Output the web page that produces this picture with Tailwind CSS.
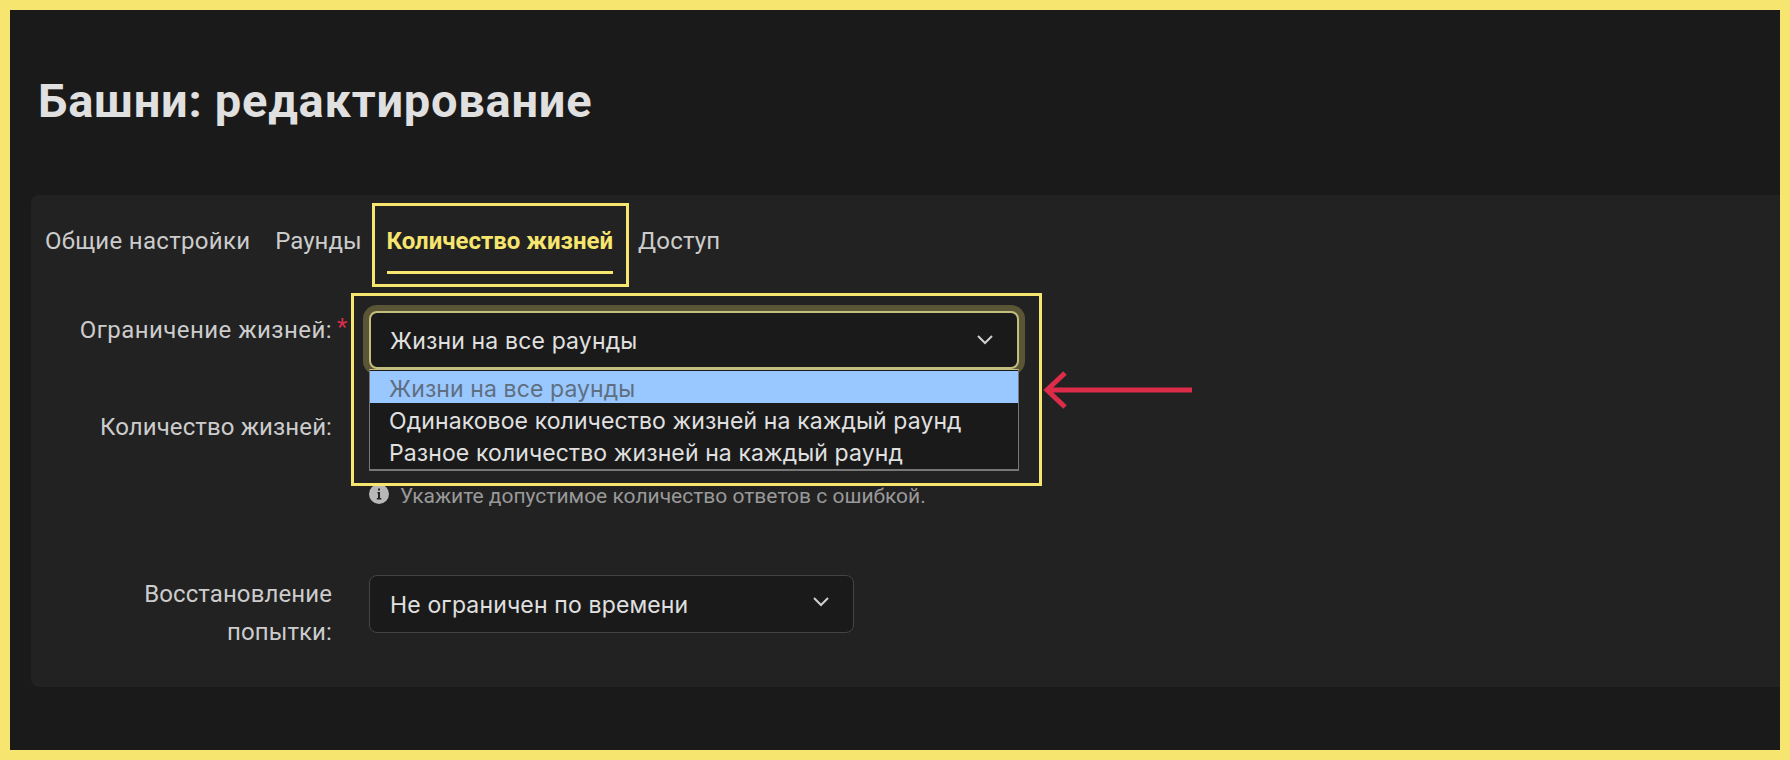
<!DOCTYPE html>
<html lang="ru">
<head>
<meta charset="utf-8">
<script src="https://cdn.jsdelivr.net/npm/@tailwindcss/browser@4"></script>
</head>
<body class="m-0">
<div class="relative w-[1790px] h-[760px] overflow-hidden border-[10px] border-[#f6e56e] bg-[#1a1a1a] font-['Roboto',sans-serif] text-[#d9d9d9]">
  <div class="pl-[21px] flex flex-col h-full">
    <h1 class="h-[185px] pl-[7px] pt-[53px] text-[47px] leading-[76px] font-bold text-[#e0e0e0] tracking-[0.75px]">Башни: редактирование</h1>
    <section class="relative h-[492px] rounded-l-lg bg-[#222222]">
      <nav class="flex gap-[25px] pl-[14px] h-[79px] text-[24px]">
        <a class="pt-[29px] leading-[34px] tracking-[0.3px] text-[#cccccc]">Общие настройки</a>
        <a class="pt-[29px] leading-[34px] text-[#cccccc]">Раунды</a>
        <a class="pt-[29px] leading-[34px] font-bold text-[#f6e56e] border-b-[3px] border-[#f6e56e]">Количество жизней</a>
        <a class="pt-[29px] leading-[34px] tracking-[0.2px] text-[#cccccc]">Доступ</a>
      </nav>
      <div class="pt-[37px] flex flex-col">
        <div class="flex h-[87px]">
          <label class="w-[301px] text-right text-[24px] leading-[38px] tracking-[0.45px] text-[#cccccc]">Ограничение жизней:<span class="absolute ml-[5px] -mt-[3px] text-[#dc2c4a]">*</span></label>
          <div class="relative ml-[37px]">
            <div class="flex items-center justify-between w-[650px] h-[58px] pl-[19px] pr-[24px] rounded-lg border-2 border-[#c4bd80] bg-[#1a1a1a] font-['Inter',sans-serif] text-[23px] tracking-[0.15px] text-[#e0e0e0] shadow-[0_0_0_6px_#5a5535]">
              <span class="mt-[2px]">Жизни на все раунды</span>
              <svg class="w-[16px] h-[10px]" viewBox="0 0 16 10" fill="none" stroke="#d0d0d0" stroke-width="2"><path d="M1 1l7 7 7-7"/></svg>
            </div>
            <ul class="absolute z-10 left-0 top-[58px] w-[650px] h-[102px] pt-[1px] border border-b-2 border-[#777777] border-t-[#c4bd80] bg-[#1a1a1a] font-['Inter',sans-serif] text-[23px] tracking-[0.1px] leading-[36px] text-[#e0e0e0]">
              <li class="h-[32px] pl-[19px] bg-[#99c7ff] text-[#5f6f80]">Жизни на все раунды</li>
              <li class="h-[32px] pl-[19px]">Одинаковое количество жизней на каждый раунд</li>
              <li class="h-[32px] pl-[19px]">Разное количество жизней на каждый раунд</li>
            </ul>
          </div>
        </div>
        <div class="flex h-[177px]">
          <label class="w-[301px] text-right text-[24px] leading-[58px] tracking-[0.1px] text-[#cccccc]">Количество жизней:</label>
          <div class="ml-[37px] pt-[86px] flex items-center h-[106px] gap-[11px] text-[21px] text-[#999999]">
            <svg class="w-[20px] h-[20px]" viewBox="0 0 20 20"><circle cx="10" cy="10" r="10" fill="#b8b8b8"/><path d="M8.5 8h2.5v6h1.3v1.5H7.8V14h1.2V9.5H8.5zM9 4.5h2v2H9z" fill="#222222"/></svg>
            <span class="mt-[5px]">Укажите допустимое количество ответов с ошибкой.</span>
          </div>
        </div>
        <div class="flex">
          <label class="w-[301px] text-right text-[24px] leading-[38px] tracking-[0.1px] text-[#cccccc]">Восстановление<br>попытки:</label>
          <div class="ml-[37px] flex items-center justify-between w-[485px] h-[58px] pl-[20px] pr-[24px] rounded-lg border border-[#444444] bg-[#1a1a1a] font-['Inter',sans-serif] text-[23px] tracking-[0.15px] text-[#e0e0e0]">
            <span class="mt-[2px]">Не ограничен по времени</span>
            <svg class="w-[16px] h-[10px] -mt-[4px]" viewBox="0 0 16 10" fill="none" stroke="#d0d0d0" stroke-width="2"><path d="M1 1l7 7 7-7"/></svg>
          </div>
        </div>
      </div>
    </section>
  </div>
  <div class="absolute z-20 left-[362px] top-[193px] w-[257px] h-[84px] border-[3px] border-[#f6e56e]"></div>
  <div class="absolute z-20 left-[341px] top-[283px] w-[691px] h-[193px] border-[3px] border-[#f6e56e]"></div>
  <svg class="absolute z-20 left-[1032px] top-[360px]" width="152" height="40" viewBox="0 0 152 40" fill="none" stroke="#dc2c4a" stroke-width="5"><path d="M150 20H6M23 3L5 20l18 17"/></svg>
</div>
</body>
</html>
